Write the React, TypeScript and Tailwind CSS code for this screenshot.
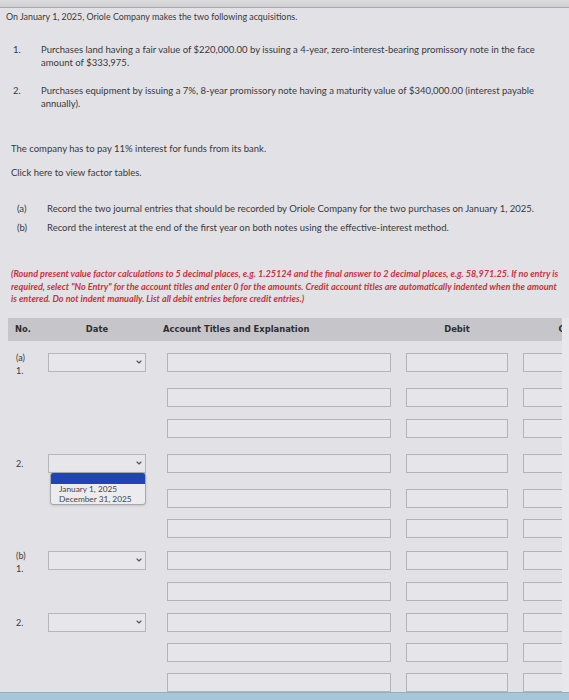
import React from "react";
import { ChevronDown } from "lucide-react";

const Select = ({ className = "" }: { className?: string }) => (
  <div
    className={`w-[98px] h-[19px] border border-[#b6b6ba] bg-[#e7e7eb] flex items-center justify-end pr-[2px] ${className}`}
  >
    <ChevronDown size={8} strokeWidth={3.5} color="#555" />
  </div>
);

const Input = ({ w }: { w: string }) => (
  <div className={`${w} h-[19px] border border-[#b4b4b8] bg-[#e6e6ea] shrink-0`} />
);

type Row = { mt: string; label?: React.ReactNode; date?: boolean; dropdown?: boolean };

const rows: Row[] = [
  { mt: "mt-[12px]", label: (<><div>(a)</div><div>1.</div></>), date: true },
  { mt: "mt-[16px]" },
  { mt: "mt-[12px]" },
  { mt: "mt-[16px]", label: <div className="mt-[5px]">2.</div>, date: true, dropdown: true },
  { mt: "mt-[16px]" },
  { mt: "mt-[11px]" },
  { mt: "mt-[13px]", label: (<><div>(b)</div><div>1.</div></>), date: true },
  { mt: "mt-[12px]" },
  { mt: "mt-[12px]", label: <div className="mt-[5px]">2.</div>, date: true },
  { mt: "mt-[11px]" },
  { mt: "mt-[11px]" },
];

export default function App() {
  return (
    <div className="w-[569px] h-[700px] overflow-hidden bg-[#e2e2e6] flex flex-col font-['Lato','Noto_Sans',sans-serif] text-[#38383a] text-[9.5px] leading-[13px]">
      <div className="h-[8px] shrink-0 bg-gradient-to-b from-[#dcdcde] to-[#cfcfd2] border-b border-[#a9a9ad]" />
      <div className="pl-[6px] mt-[2px] text-[8.9px]">On January 1, 2025, Oriole Company makes the two following acquisitions.</div>

      <div className="mt-[20px] flex flex-col gap-[15px]">
        <div className="flex">
          <div className="w-[41px] pl-[13px] shrink-0">1.</div>
          <div className="pr-[20px]">
            Purchases land having a fair value of $220,000.00 by issuing a 4-year, zero-interest-bearing promissory note in the face amount of $333,975.
          </div>
        </div>
        <div className="flex">
          <div className="w-[41px] pl-[13px] shrink-0">2.</div>
          <div className="pr-[20px]">
            Purchases equipment by issuing a 7%, 8-year promissory note having a maturity value of $340,000.00 (interest payable annually).
          </div>
        </div>
      </div>

      <div className="pl-[11px] mt-[32px]">The company has to pay 11% interest for funds from its bank.</div>
      <div className="pl-[11px] mt-[11px]">Click here to view factor tables.</div>

      <div className="mt-[23px] flex flex-col gap-[6px]">
        <div className="flex">
          <div className="w-[47px] pl-[17px] shrink-0">(a)</div>
          <div>Record the two journal entries that should be recorded by Oriole Company for the two purchases on January 1, 2025.</div>
        </div>
        <div className="flex">
          <div className="w-[47px] pl-[17px] shrink-0">(b)</div>
          <div>Record the interest at the end of the first year on both notes using the effective-interest method.</div>
        </div>
      </div>

      <div className="mt-[34px] pl-[11px] text-[#cc3040] font-bold italic text-[9.1px] leading-[12.5px] whitespace-nowrap">
        <div>(Round present value factor calculations to 5 decimal places, e.g. 1.25124 and the final answer to 2 decimal places, e.g. 58,971.25. If no entry is</div>
        <div>required, select "No Entry" for the account titles and enter 0 for the amounts. Credit account titles are automatically indented when the amount</div>
        <div>is entered. Do not indent manually. List all debit entries before credit entries.)</div>
      </div>

      <div className="flex-1 min-h-0 mt-[12px] flex">
        <div className="w-[562px] shrink-0 overflow-hidden">
          <div className="ml-[8px] h-[23px] bg-[#c6c6ca] flex items-center font-['DejaVu_Sans',sans-serif] font-bold text-[8.4px] text-[#2e2e30] whitespace-nowrap">
            <div className="w-[40px] pl-[7px] shrink-0">No.</div>
            <div className="w-[98px] text-center shrink-0">Date</div>
            <div className="w-[224px] ml-[17px] shrink-0">Account Titles and Explanation</div>
            <div className="w-[102px] ml-[19px] text-center shrink-0">Debit</div>
            <div className="w-[100px] ml-[15px] text-center shrink-0">Credit</div>
          </div>

          {rows.map((r, i) => (
            <div key={i} className={`${r.mt} ml-[8px] flex h-[19px]`}>
              <div className="w-[40px] pl-[8px] shrink-0 text-[9px] leading-[13px] -mt-[2px]">{r.label}</div>
              <div className="w-[98px] shrink-0 relative">
                {r.date && <Select />}
                {r.dropdown && (
                  <div className="absolute left-[2px] top-[18px] w-[96px] h-[33px] border border-[#a8a8ac] rounded-[3px] bg-[#ececef] overflow-hidden z-10 shadow-sm">
                    <div className="h-[11px] bg-[#1f44b4]" />
                    <div className="pl-[8px] text-[8.3px] leading-[10px] text-[#444]">
                      <div>January 1, 2025</div>
                      <div>December 31, 2025</div>
                    </div>
                  </div>
                )}
              </div>
              <div className="ml-[21px] flex gap-[15px]">
                <Input w="w-[224px]" />
                <Input w="w-[102px]" />
                <Input w="w-[100px]" />
              </div>
            </div>
          ))}
        </div>
        <div className="flex-1 bg-[#e8e8ec]" />
      </div>

      <div className="h-[8px] shrink-0 bg-[#a8c6d9] border-t border-[#8fb0c6]" />
    </div>
  );
}
